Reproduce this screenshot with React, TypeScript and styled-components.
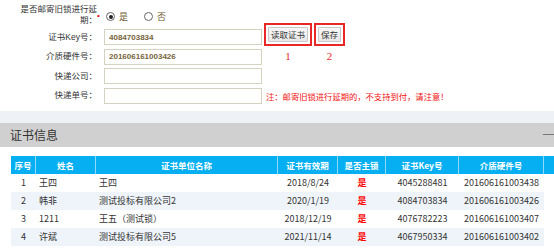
import React from "react";
import styled, { createGlobalStyle } from "styled-components";

const GlobalStyle = createGlobalStyle`
  html, body {
    margin: 0;
    padding: 0;
    background: #fff;
    overflow: hidden;
  }
  body {
    font-family: "Liberation Sans", "Noto Sans CJK SC", sans-serif;
    color: #333;
  }
  * { box-sizing: border-box; }
`;

const cols = "25px 60px 182px 60px 48px 73px 85px";

const rows = [
	{ no: 1, name: "王四", org: "王四", date: "2018/8/24", key: "4045288481", hw: "201606161003438" },
	{ no: 2, name: "韩非", org: "测试投标有限公司2", date: "2020/1/19", key: "4084703834", hw: "201606161003426" },
	{ no: 3, name: "1211", org: "王五（测试锁）", date: "2018/12/19", key: "4076782223", hw: "201606161003407" },
	{ no: 4, name: "许斌", org: "测试投标有限公司5", date: "2021/11/14", key: "4067950334", hw: "201606161003402" },
];

const headers = ["序号", "姓名", "证书单位名称", "证书有效期", "是否主锁", "证书Key号", "介质硬件号", ""];

const App: React.FunctionComponent = () => {
	return (
		<Page>
			<GlobalStyle />
			<Form>
				<FormRow $h={24}>
					<Label>是否邮寄旧锁进行延期：</Label>
					<Required>•</Required>
					<RadioGroup>
						<RadioItem>
							<Radio $checked />是
						</RadioItem>
						<RadioItem>
							<Radio />否
						</RadioItem>
					</RadioGroup>
				</FormRow>
				<FormRow $h={20}>
					<Label>证书Key号：</Label>
					<Input defaultValue="4084703834" />
					<Mark $num="1">
						<Button>读取证书</Button>
					</Mark>
					<Mark $num="2">
						<Button>保存</Button>
					</Mark>
				</FormRow>
				<FormRow $h={19.5}>
					<Label>介质硬件号：</Label>
					<Input defaultValue="201606161003426" />
				</FormRow>
				<FormRow $h={19.5}>
					<Label>快递公司：</Label>
					<Input />
				</FormRow>
				<FormRow $h={19.5}>
					<Label>快递单号：</Label>
					<Input />
					<Notice>注：邮寄旧锁进行延期的，不支持到付，请注意！</Notice>
				</FormRow>
			</Form>

			<Band />
			<SectionHeader>
				<SectionTitle>证书信息</SectionTitle>
				<Collapse />
			</SectionHeader>

			<Grid>
				<HeaderRow>
					{headers.map((h, i) => (
						<HeadCell key={i}>{h}</HeadCell>
					))}
				</HeaderRow>
				{rows.map((r, i) => (
					<BodyRow key={r.no} $striped={i % 2 === 1}>
						<Cell $align="center">{r.no}</Cell>
						<Cell>{r.name}</Cell>
						<Cell>{r.org}</Cell>
						<Cell $align="center">{r.date}</Cell>
						<Cell $align="center">
							<Yes>是</Yes>
						</Cell>
						<Cell $align="center">{r.key}</Cell>
						<Cell $align="center">{r.hw}</Cell>
					</BodyRow>
				))}
			</Grid>
		</Page>
	);
};

const Page = styled.div`
	width: 554px;
	height: 251px;
	overflow: hidden;
`;

const Form = styled.div`
	padding-top: 3px;
	display: flex;
	flex-direction: column;
`;

const FormRow = styled.div<{ $h: number }>`
	display: flex;
	align-items: center;
	height: ${(p) => p.$h}px;
`;

const Label = styled.div`
	width: 97px;
	padding-left: 20px;
	text-align: right;
	font-size: 8.5px;
	line-height: 11px;
	color: #333;
	flex-shrink: 0;
`;

const Required = styled.span`
	color: #e00;
	font-size: 8px;
	width: 7px;
	margin-top: 1px;
`;

const RadioGroup = styled.div`
	display: flex;
	align-items: center;
	gap: 16px;
	margin-left: 2px;
	margin-top: 3px;
`;

const RadioItem = styled.label`
	display: flex;
	align-items: center;
	gap: 4px;
	font-size: 9px;
	color: #6b5b2b;
`;

const Radio = styled.span<{ $checked?: boolean }>`
	width: 9px;
	height: 9px;
	border-radius: 50%;
	border: 1px solid #666;
	background: #fff;
	display: inline-flex;
	align-items: center;
	justify-content: center;
	&::after {
		content: "";
		width: 4px;
		height: 4px;
		border-radius: 50%;
		background: ${(p) => (p.$checked ? "#222" : "transparent")};
	}
`;

const Input = styled.input`
	margin-left: 7px;
	width: 158px;
	height: 16px;
	border: 1px solid #d6d2c2;
	padding: 0 4px;
	font-family: "Liberation Sans", "Noto Sans CJK SC", sans-serif;
	font-size: 8px;
	font-weight: bold;
	color: #75653a;
	outline: none;
	background: #fff;
`;

const Mark = styled.div<{ $num: string }>`
	position: relative;
	margin-left: 2px;
	align-self: flex-start;
	margin-top: -4px;
	border: 2px solid #e82727;
	padding: 2px;
	display: flex;
	&::after {
		content: "${(p) => p.$num}";
		position: absolute;
		left: 0;
		right: 0;
		top: 25px;
		text-align: center;
		color: #e82727;
		font-family: "Liberation Serif", serif;
		font-size: 11px;
	}
`;

const Button = styled.button`
	height: 15px;
	padding: 0 2px;
	border: 1px solid #c9c9c9;
	background: linear-gradient(#f7f7f7, #e8e8e8);
	font-family: "Noto Sans CJK SC", sans-serif;
	font-size: 8.5px;
	line-height: 13px;
	color: #333;
	border-radius: 1px;
`;

const Notice = styled.span`
	margin-left: 4px;
	font-size: 8.3px;
	color: #f01010;
`;

const Band = styled.div`
	margin-top: 5px;
	height: 12px;
	background: #eef2f6;
`;

const SectionHeader = styled.div`
	height: 24px;
	background: #d0d0d0;
	display: flex;
	align-items: center;
	justify-content: space-between;
	padding-left: 10px;
`;

const SectionTitle = styled.span`
	font-family: "Noto Sans CJK SC", sans-serif;
	font-size: 12px;
	color: #333;
`;

const Collapse = styled.span`
	width: 11px;
	height: 1px;
	background: #777;
	margin-top: -1px;
`;

const Grid = styled.div`
	margin-top: 9px;
	margin-left: 11px;
	font-family: "Noto Sans CJK SC", sans-serif;
`;

const HeaderRow = styled.div`
	display: grid;
	grid-template-columns: ${cols} 30px;
	height: 18px;
	background: #06aff2;
	width: 563px;
`;

const HeadCell = styled.div`
	display: flex;
	align-items: center;
	justify-content: center;
	color: #fff;
	font-weight: bold;
	font-size: 8.5px;
	border-right: 1px solid #8fd8f8;
`;

const BodyRow = styled.div<{ $striped?: boolean }>`
	display: grid;
	grid-template-columns: ${cols};
	height: 18px;
	width: 533px;
	background: ${(p) => (p.$striped ? "#eef4f9" : "#fff")};
`;

const Cell = styled.div<{ $align?: "left" | "center" }>`
	display: flex;
	align-items: center;
	justify-content: ${(p) => (p.$align === "center" ? "center" : "flex-start")};
	padding-left: ${(p) => (p.$align === "center" ? 0 : 3)}px;
	font-size: 9px;
	color: #333;
	white-space: nowrap;
`;

const Yes = styled.span`
	color: #f00;
	font-weight: bold;
`;

export default App;
